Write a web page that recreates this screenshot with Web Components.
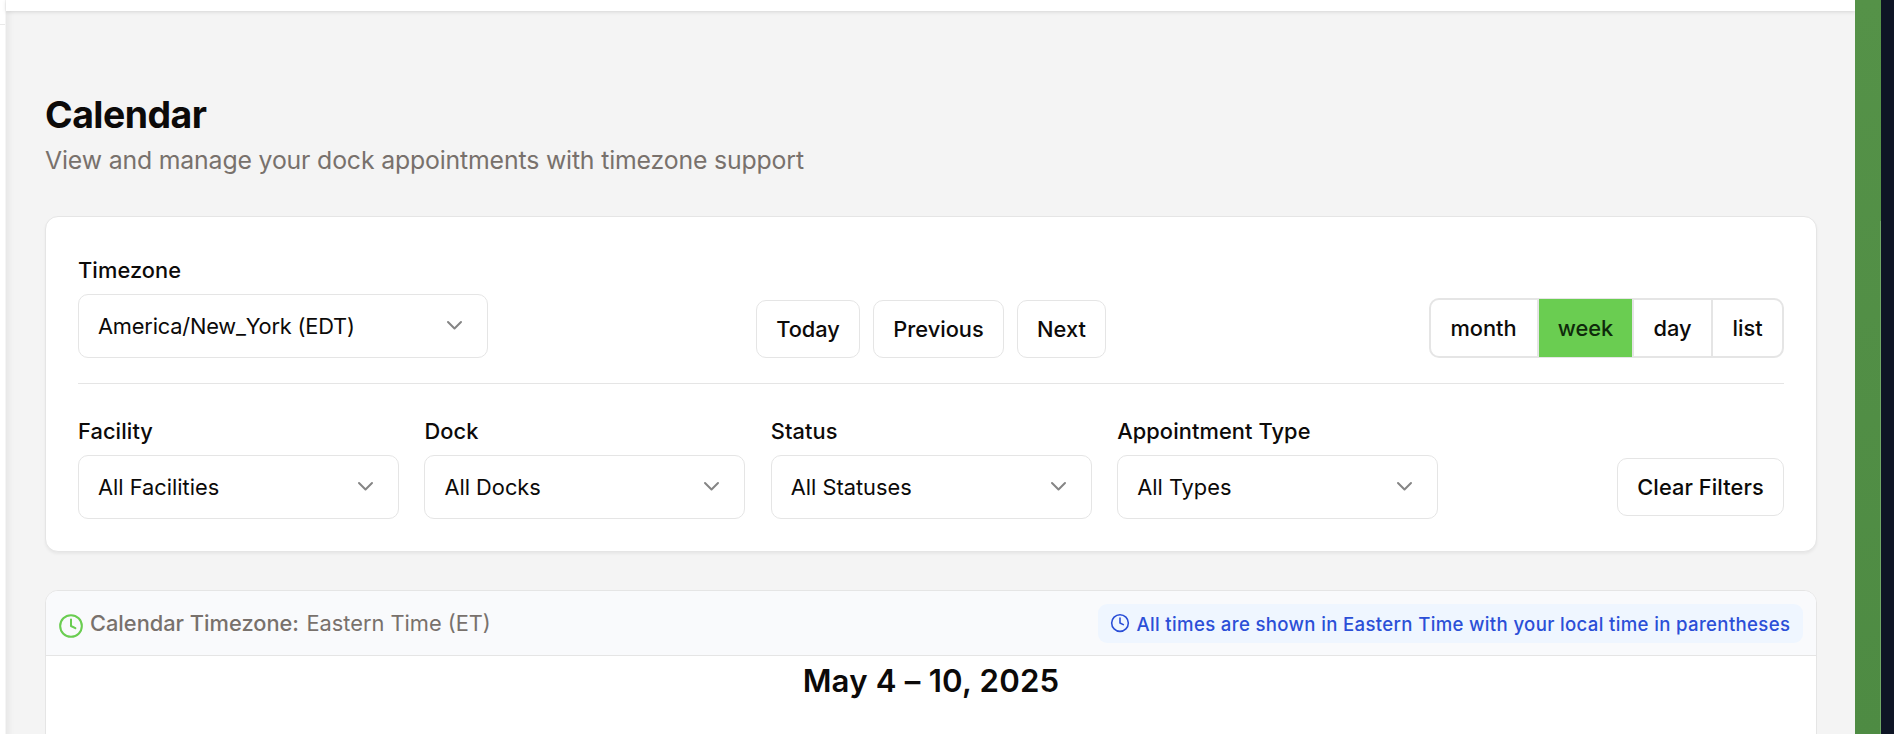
<!DOCTYPE html>
<html lang="en">
<head>
<meta charset="utf-8">
<title>Calendar</title>
<style>
html,body{margin:0;height:100%;overflow:hidden}
body{font-family:Inter,"Liberation Sans",sans-serif;color:#0c0a09;background:#fff}
</style>
</head>
<body>
<calendar-app></calendar-app>
<script>
const define=(name,html)=>{
  const t=document.createElement('template');t.innerHTML=html;
  customElements.define(name,class extends HTMLElement{
    constructor(){super();this.attachShadow({mode:'open'}).append(t.content.cloneNode(true));}
  });
};
define('clock-icon',`<style>:host{display:block;flex:none}svg{display:block;width:100%;height:100%}</style>
<svg viewBox="0 0 24 24" fill="none" stroke="currentColor" stroke-width="1.9" stroke-linecap="round" stroke-linejoin="round"><circle cx="12" cy="12" r="10"/><path d="M12 6v6l4 2"/></svg>`);
define('select-field',`<style>
:host{display:block;font-size:21.8px}
label{display:block;box-sizing:border-box;padding-top:1px;font-weight:500;line-height:32px;height:41px;white-space:nowrap;letter-spacing:.1px}
.box{box-sizing:border-box;height:64px;border:1px solid #e5e5e5;border-radius:10px;padding:0 24px 0 19px;display:flex;align-items:center;justify-content:space-between;white-space:nowrap}
svg{width:17px;height:11px;display:block;margin-top:-1px}
</style>
<label><slot name="label"></slot></label>
<div class="box"><slot></slot><svg viewBox="0 0 17 11" fill="none" stroke="#858585" stroke-width="2" stroke-linecap="round" stroke-linejoin="round"><path d="M2 2l6.5 6.5L15 2"/></svg></div>`);
define('ui-button',`<style>
:host{box-sizing:border-box;height:58px;border:1px solid #e5e5e5;border-radius:10px;display:flex;align-items:center;justify-content:center;font-size:21.8px;font-weight:500;white-space:nowrap;background:#fff}
</style><slot></slot>`);
define('view-switch',`<style>
:host{box-sizing:border-box;width:355px;height:60px;border:2px solid #e5e5e5;border-radius:10px;display:flex;font-size:21.8px;font-weight:500}
::slotted(*){box-sizing:border-box;display:flex;align-items:center;justify-content:center;border-left:2px solid #e5e5e5}
::slotted(:first-child){border-left:0;padding-right:1px}
::slotted([active]){background:#6acd51;color:#0f2a0b;margin:-1px 0}
</style><slot></slot>`);
define('filter-card',`<style>
:host{display:block;box-sizing:border-box;height:336px;border:1px solid #e5e5e5;border-radius:13px;background:#fff;padding:36px 32px 0;box-shadow:0 2px 3px rgba(0,0,0,.05)}
.top{height:130px;border-bottom:1px solid #e5e5e5;display:flex;justify-content:space-between;align-items:flex-start}
.tz{width:410px}.nav{display:flex;gap:13px;margin:47px 0 0 -55px}
view-switch{margin-top:45px}
.filters{display:flex;gap:25.4px;padding-top:30px}
.filters select-field{width:321px}
.clear{width:167px;margin:44px 0 0 auto;letter-spacing:.08px}
</style>
<div class="top">
<select-field class="tz"><span slot="label">Timezone</span><span style="letter-spacing:-.19px">America/New_York (EDT)</span></select-field>
<div class="nav"><ui-button style="width:104px"><span>Today</span></ui-button><ui-button style="width:131px"><span>Previous</span></ui-button><ui-button style="width:89px"><span>Next</span></ui-button></div>
<view-switch><span style="width:106px">month</span><span active style="width:95px">week</span><span style="width:79px">day</span><span style="flex:1">list</span></view-switch>
</div>
<div class="filters">
<select-field><span slot="label">Facility</span><span>All Facilities</span></select-field>
<select-field><span slot="label">Dock</span><span>All Docks</span></select-field>
<select-field><span slot="label">Status</span><span>All Statuses</span></select-field>
<select-field><span slot="label">Appointment Type</span><span>All Types</span></select-field>
<ui-button class="clear"><span>Clear Filters</span></ui-button>
</div>`);
define('calendar-card',`<style>
:host{display:block;box-sizing:border-box;height:200px;border:1px solid #e5e5e5;border-radius:13px;background:#fff;overflow:hidden}
header{box-sizing:border-box;height:65px;border-bottom:1px solid #e5e5e5;background:#f9fafc;display:flex;align-items:center;padding:0 13px 0 12px;white-space:nowrap;color:#78716c;font-size:21.8px}
.green{width:26px;height:26px;color:#6acd51;margin:5px 6px 0 0}
b{font-weight:500}.et{margin-left:7.5px}
.note{box-sizing:border-box;margin-left:auto;width:705px;height:39px;border-radius:9px;background:#eff6ff;color:#2b4fd7;display:flex;align-items:center;padding-left:12px;font-size:18.6px;font-weight:500;letter-spacing:.34px}
.note span{padding-top:2px}
.blue{width:20px;height:20px;margin-right:6.5px}
h2{margin:7px 0 0;text-align:center;font-size:31.2px;line-height:36px;font-weight:600;letter-spacing:.2px}
</style>
<header><clock-icon class="green"></clock-icon><b>Calendar Timezone:</b><span class="et">Eastern Time (ET)</span>
<div class="note"><clock-icon class="blue"></clock-icon><span>All times are shown in Eastern Time with your local time in parentheses</span></div></header>
<h2>May 4 – 10, 2025</h2>`);
define('calendar-app',`<style>
:host{display:flex;width:1894px;height:734px;overflow:hidden}
.side{width:6px;box-sizing:border-box;border-right:1px solid #f5f5f5}.side i{display:block;height:24px;border-bottom:1px solid #e9e9e9}
.col{width:1849px;display:flex;flex-direction:column;background:#f4f4f4}
.bar{flex:none;height:11px;background:#fff;box-shadow:0 1px 4px rgba(0,0,0,.12)}
main{flex:1;padding:81px 38px 0 39px;box-shadow:inset 7px 0 7px -5px rgba(0,0,0,.07)}
h1{margin:0;font-size:37.4px;line-height:46px;font-weight:700;letter-spacing:-.5px}
p{margin:0;font-size:24.8px;line-height:44px;color:#78716c;letter-spacing:-.15px}
filter-card{margin-top:34px}calendar-card{margin-top:38px}
.green{width:26px;background:linear-gradient(#559248,#4e8b43);box-sizing:border-box;display:flex;justify-content:flex-end}
.green i{width:1px;height:513px;margin-top:221px;background:#6fa765}
.navy{width:13px;background:#0e1525}
</style>
<div class="side"><i></i></div>
<div class="col"><div class="bar"></div><main><h1>Calendar</h1><p>View and manage your dock appointments with timezone support</p>
<filter-card></filter-card><calendar-card></calendar-card></main></div>
<div class="green"><i></i></div><div class="navy"></div>`);
</script>
</body>
</html>
